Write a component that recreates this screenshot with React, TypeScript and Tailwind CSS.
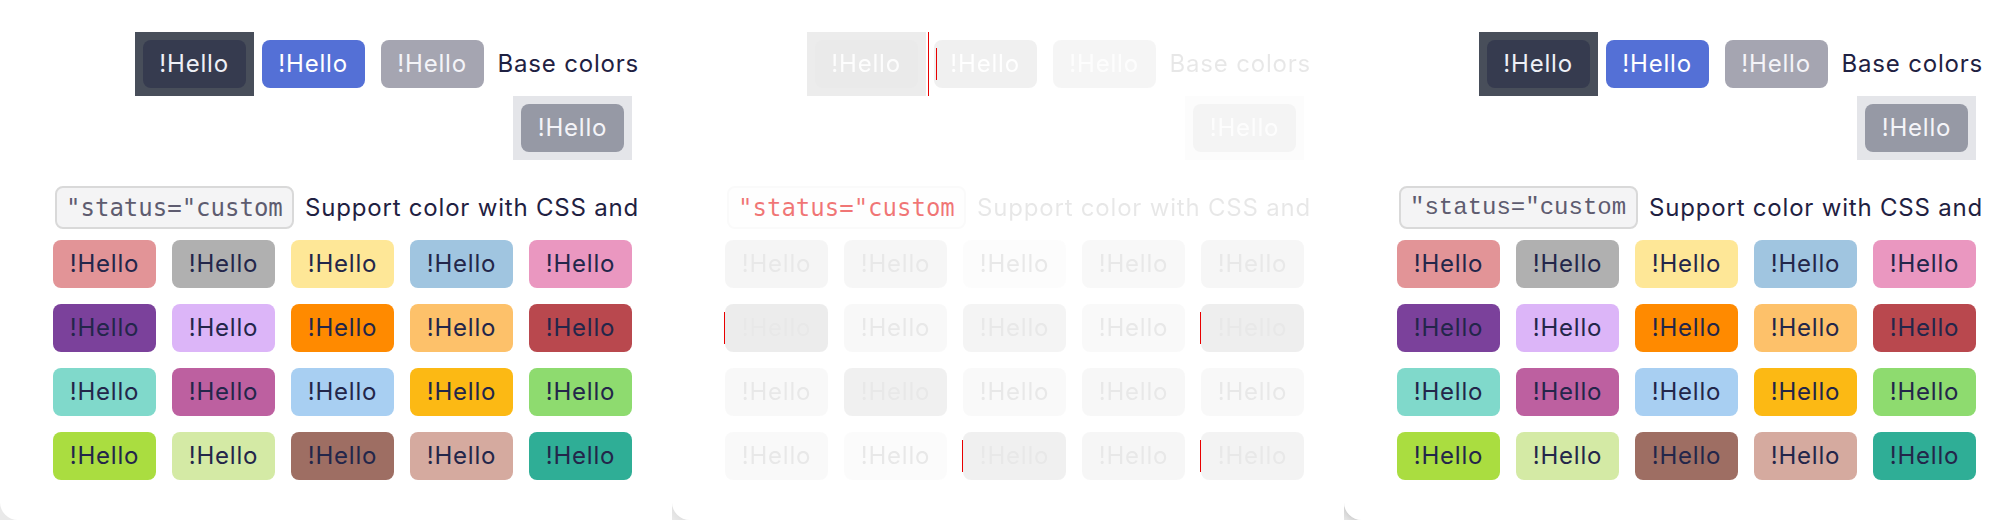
import React from 'react';

const cells = [
  ['bg-[#e29497]', 'bg-[#b0b0b0]', 'bg-[#fee797]', 'bg-[#a0c5e0]', 'bg-[#ea97c0]'],
  ['bg-[#7b419b]', 'bg-[#dcb5f8]', 'bg-[#ff8a00]', 'bg-[#fdc16a]', 'bg-[#b9484e]'],
  ['bg-[#80d9cb]', 'bg-[#bd60a0]', 'bg-[#a8cff2]', 'bg-[#fcb914]', 'bg-[#8edb6f]'],
  ['bg-[#aadd40]', 'bg-[#d4eaa5]', 'bg-[#9e6e63]', 'bg-[#d5aa9f]', 'bg-[#2fae96]'],
];

function Panel({ dim = false, mono = 'dejavu' }: { dim?: boolean; mono?: 'dejavu' | 'liberation' }) {
  const fade = dim ? 'grayscale opacity-10' : '';
  const monoFont =
    mono === 'dejavu'
      ? "font-['DejaVu_Sans_Mono',monospace]"
      : "font-['Liberation_Mono',monospace]";

  return (
    <div className="relative w-[672px] h-[520px] shrink-0 bg-white rounded-bl-[18px] font-['Inter',sans-serif] text-[24px] tracking-[0.8px] text-[#1f2142]">
      <div className="w-[586px] ml-[53px] pt-8 flex flex-col">
        {/* base colors */}
        <div className={`flex items-center justify-end ${fade}`}>
          <div className="bg-[#484e5a] px-2 py-2">
            <div className="w-[103px] h-12 rounded-lg bg-[#363b4f] text-[#eef0f6] flex items-center justify-center">!Hello</div>
          </div>
          <div className="ml-2 w-[103px] h-12 rounded-lg bg-[#5470d6] text-white flex items-center justify-center">!Hello</div>
          <div className="ml-4 w-[103px] h-12 rounded-lg bg-[#a5a5b1] text-[#f4f4f8] flex items-center justify-center">!Hello</div>
          <span className="ml-[14px] leading-none">Base colors</span>
        </div>
        <div className={`flex justify-end mr-[7px] ${fade}`}>
          <div className="bg-[#e4e5e9] px-2 py-2">
            <div className="w-[103px] h-12 rounded-lg bg-[#9699a5] text-[#f4f4f8] flex items-center justify-center">!Hello</div>
          </div>
        </div>

        {/* custom */}
        <div className="mt-[26px] flex items-center justify-end gap-[11px]">
          <div
            className={`h-[43px] w-[239px] rounded-lg border-2 flex items-center pl-[9px] text-[24px] tracking-normal leading-none ${monoFont} ${
              dim ? 'border-[#fafafa] bg-[#fefefe] text-[#e81818]/60' : 'border-[#d9d9d9] bg-[#f4f4f5] text-[#5e5c70]'
            }`}
          >
            "status="custom
          </div>
          <span className={`leading-none ${fade}`}>Support color with CSS and</span>
        </div>

        <div className={`mt-[11px] w-[579px] grid grid-cols-5 gap-4 ${fade}`}>
          {cells.flat().map((c, i) => (
            <div key={i} className={`h-12 rounded-lg ${c} flex items-center justify-center text-[#23264a]`}>
              !Hello
            </div>
          ))}
        </div>
      </div>

      {dim && (
        <>
          <div className="absolute left-[256px] top-8 w-px h-16 bg-[#e80000]" />
          <div className="absolute left-[264px] top-12 w-px h-8 bg-[#e80000]" />
          <div className="absolute left-[52px] top-[312px] w-px h-8 bg-[#e80000]" />
          <div className="absolute left-[528px] top-[312px] w-px h-8 bg-[#e80000]" />
          <div className="absolute left-[290px] top-[440px] w-px h-8 bg-[#e80000]" />
          <div className="absolute left-[528px] top-[440px] w-px h-8 bg-[#e80000]" />
        </>
      )}
    </div>
  );
}

export default function App() {
  return (
    <div className="w-[2016px] h-[520px] flex bg-[#e9e9e9] overflow-hidden">
      <Panel />
      <div className="shadow-[-2px_2px_6px_rgba(0,0,0,0.04)] rounded-bl-[18px]">
        <Panel dim />
      </div>
      <div className="shadow-[-2px_2px_6px_rgba(0,0,0,0.12)] rounded-bl-[18px]">
        <Panel mono="liberation" />
      </div>
    </div>
  );
}
